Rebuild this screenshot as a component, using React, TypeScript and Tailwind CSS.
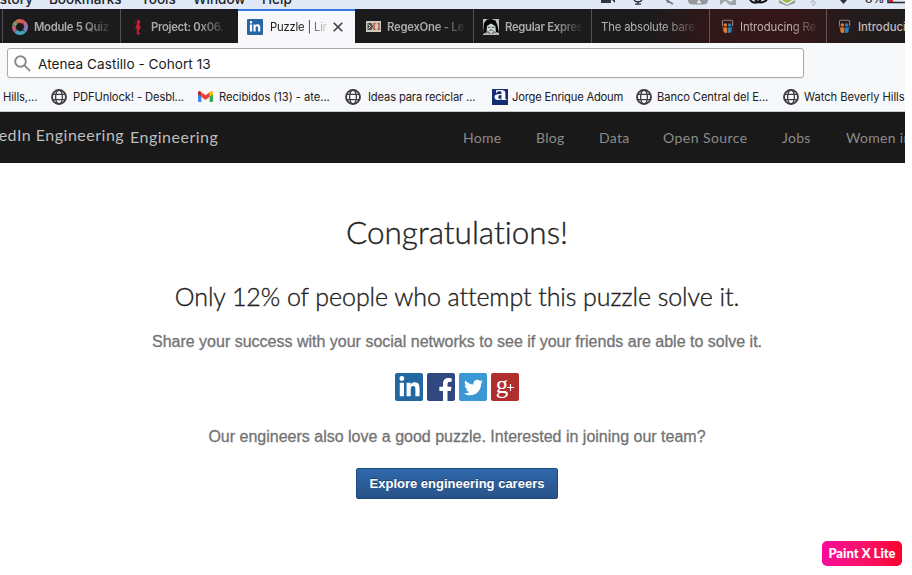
import React from "react";
import { FaFacebookF, FaLinkedinIn, FaTwitter } from "react-icons/fa";

function Globe() {
  return (
    <svg className="size-4 shrink-0" viewBox="0 0 16 16" fill="none" stroke="#3f3f42">
      <circle cx="8" cy="8" r="7" strokeWidth="1.9" />
      <ellipse cx="8" cy="8" rx="3.4" ry="7" strokeWidth="1.3" />
      <path d="M2 5.3h12M2 10.7h12" strokeWidth="1.3" />
    </svg>
  );
}

function Gmail() {
  return (
    <svg className="h-[11px] w-[15px] shrink-0" viewBox="0 0 15 11">
      <path d="M0 1.6v8.4a1 1 0 0 0 1 1h2.4V4.2z" fill="#4285f4" />
      <path d="M15 1.6v8.4a1 1 0 0 1-1 1h-2.4V4.2z" fill="#34a853" />
      <path d="M11.6 4.2V1L13 .2a1.3 1.3 0 0 1 2 1.2v1.8l-3.4 2.6z" fill="#fbbc04" />
      <path d="M0 3.2V1.4A1.3 1.3 0 0 1 2.1.3l1.3.9v4.6z" fill="#c5221f" />
      <path d="M3.4 1.2v4.6l4.1 3.1 4.1-3.1V1.2L7.5 4.3z" fill="#ea4335" />
    </svg>
  );
}

function LinkedInTile() {
  return (
    <span className="flex size-4 shrink-0 items-center justify-center rounded-[1px] bg-[#2764a5]">
      <FaLinkedinIn className="size-3 text-white" />
    </span>
  );
}

function Ring() {
  return (
    <svg className="size-4 shrink-0" viewBox="0 0 16 16" fill="none" strokeWidth="4">
      <path d="M3.800 12.200A6 6 0 0 1 2.100 6.800" stroke="#b9607f" />
      <path d="M2.100 6.800A6 6 0 0 1 3.800 3.800" stroke="#6fa268" />
      <path d="M3.800 3.800A6 6 0 0 1 8 2" stroke="#b97a55" />
      <path d="M8 2a6 6 0 0 1 4.200 1.800" stroke="#d8564e" />
      <path d="M12.200 3.800A6 6 0 0 1 14 8" stroke="#b06ba0" />
      <path d="M14 8a6 6 0 0 1-1.800 4.200" stroke="#7d80bf" />
      <path d="M12.200 12.200A6 6 0 0 1 3.800 12.200" stroke="#3fa3bd" />
      <path d="M5 3.300 9 5M11.500 4.500 12 9M12 11.500 7.500 12M4.500 11.500 4 7" stroke="#1b1b1b" strokeWidth=".5" />
    </svg>
  );
}

function Seahorse() {
  return (
    <svg className="h-4 w-[10px] shrink-0" viewBox="0 0 10 16">
      <path
        d="M2 3.200 4 2.400 4.600.5l1.600.4 1 1.300-.3 1.900-1 1.300 1.400 1.400.2 2.200-1.300 2-.8 1.600.4 1.300 1-.5.5.7-.6 1.200-1.500.4-1.500-1-.3-1.700.7-2-.7-1.500-1.200-.8.3-1 1-.5-.1-1.600.9-1.500-.3-1L2 4.200z"
        fill="#d01a38"
      />
    </svg>
  );
}

function RegexBadge() {
  return (
    <svg className="h-[11px] w-[15px] shrink-0" viewBox="0 0 15 11">
      <path d="M0 0h15v11H0z" fill="#d0c9bd" />
      <path d="M1.500 2h4l1.500 3.500L5.500 9h-4z" fill="#4f504c" />
      <path d="m2.500 3.500 2 2-2 2" fill="none" stroke="#dedbd2" />
      <path d="M9.500 2.700H8v5.600h1.500M11.500 2.700H13v5.600h-1.500" fill="none" stroke="#b6452e" strokeWidth="1.300" />
    </svg>
  );
}

function Face() {
  return (
    <svg className="size-4 shrink-0" viewBox="0 0 16 16">
      <path d="M0 0h16v16H0z" fill="#b9bec0" />
      <path d="M0 15 1 4l3-3.500 4-.5 4.500 1.500 2 5L16 14l-3-1-.5-5.500L8 4.500 4 7l-.5 6z" fill="#050505" />
      <path d="M4.300 7 8 4.800 12 7l-.3 4-1.500 2.500H6L4.400 11z" fill="#cfd5d5" />
      <path d="M5 8.300h2.400M8.800 8.300h2.400M6.500 11.500l1.500-.8 1.700.8M3 14.500l2-2 2 2.500M13 14.500l-2-2-2 2.500" stroke="#44494a" fill="none" />
    </svg>
  );
}

function SlideShare() {
  return (
    <svg className="h-[15px] w-[13px] shrink-0" viewBox="0 0 14 15">
      <path d="M1.600 7V2a1.300 1.300 0 0 1 1.300-1.300h8.300A1.300 1.300 0 0 1 12.500 2v5" fill="none" stroke="#8f7c7c" strokeWidth="1.200" />
      <circle cx="4.700" cy="6" r="1.900" fill="#e67c25" />
      <circle cx="9.300" cy="6" r="1.900" fill="#2882bd" />
      <path d="M.8 7.600 3 8.700h3.700v5.600L4 14.500l-1.500-2V9.800z" fill="#e67c25" />
      <path d="M13.200 7.600 11 8.700H7.300v5.600l2.700.2 1.500-2V9.800z" fill="#2882bd" />
    </svg>
  );
}

const fade = "[mask-image:linear-gradient(to_right,#000_65%,transparent_105%)]";

type TabProps = {
  icon?: React.ReactNode;
  label: string;
  box: string;
  text: string;
};

function Tab({ icon, label, box, text }: TabProps) {
  return (
    <div className={`flex shrink-0 items-center pt-px ${box}`}>
      {icon}
      <span className={`mt-px overflow-hidden whitespace-nowrap ${text}`}>{label}</span>
    </div>
  );
}

function MenuBar() {
  return (
    <div className="flex h-[9px] shrink-0 items-end overflow-hidden bg-[#e0e9f5] font-['Inter'] text-[13.5px] font-medium text-[#202327]">
      <div className="flex h-5 w-[600px] shrink-0 items-end leading-5">
        <span className="-ml-[14px] w-[63px] tracking-[0.1px]">History</span>
        <span className="w-[92px]">Bookmarks</span>
        <span className="w-[52px]">Tools</span>
        <span className="w-[69px]">Window</span>
        <span>Help</span>
      </div>
      <svg className="h-[9px] w-[305px] shrink-0" viewBox="600 0 305 9" fill="none">
        <path d="M601 0h10v3h-10zM612 0h3v3z" fill="#333638" />
        <path d="M634 0q4 4 8 0M638 1v3M635 4.200h6" stroke="#2f3234" strokeWidth="1.300" />
        <path d="m666 0 7 4M668 0v3" stroke="#74787b" strokeWidth="1.600" />
        <path d="M688 0h20q0 4.500-5 4.500h-10q-5 0-5-4.500z" fill="#96999c" />
        <path d="M697 2.500h4M699 0v2.500" stroke="#e8ecef" strokeWidth="1.500" />
        <path d="m720 5 5-4 5 4h6V0h-3l-2 2-4-2h-7z" fill="#a3a6a9" />
        <path d="M750 0q3 4 8 2l3-2M755 0q5 5 12 0" stroke="#111" strokeWidth="2" />
        <path d="m779 0 8 5 8-5v3l-8 3-8-3z" fill="#999c91" />
        <path d="M782 0h10l-5 3z" fill="#91bd35" />
        <path d="m810 3 3-3v6l3-3-3-3" stroke="#b4b9bd" />
        <path d="M840 0h7l-3.500 4z" fill="#303336" />
        <path d="M888 0v2.500h17" stroke="#26282a" strokeWidth="1.500" />
        <path d="M889 0h4v2h-4z" fill="#e51d2d" />
        <text x="865" y="3" fontSize="12" fontFamily="Inter" fill="#303336">8%</text>
      </svg>
    </div>
  );
}

function TabStrip() {
  const bold = "font-semibold text-[#aaa]";
  return (
    <div className="flex h-[34px] shrink-0 overflow-hidden bg-[linear-gradient(to_right,#1b1b1c_0,#1b1b1c_645px,#301718_710px,#351719_790px,#221b1c_860px,#201c1c_905px)] font-['Inter'] text-[11.3px]">
      <Tab icon={<Ring />} label="Module 5 Quiz" box="ml-[2px] w-[118px] border-l border-[#515151] pl-[9px]" text={`ml-[6px] w-[76px] tracking-[-0.3px] ${fade} ${bold}`} />
      <Tab icon={<Seahorse />} label="Project: 0x06." box="w-[118px] border-l border-[#515151] pl-[12px]" text={`ml-[8px] w-[74px] tracking-[-0.3px] ${fade} ${bold}`} />
      <div className="flex w-[117px] shrink-0 items-center border-t-2 border-[#3779e6] bg-[#f8f8fa] pl-[9px]">
        <LinkedInTile />
        <span className={`ml-[7px] w-[57px] overflow-hidden whitespace-nowrap tracking-[-0.2px] text-[#1d1d1f] ${fade}`}>Puzzle | LinkedIn</span>
        <svg className="ml-[6px] size-[10px] shrink-0" viewBox="0 0 10 10" stroke="#404044" strokeWidth="1.600"><path d="m.7.7 8.600 8.600M9.300.7.7 9.300" /></svg>
      </div>
      <Tab icon={<RegexBadge />} label="RegexOne - Learn" box="w-[118px] pl-[11px]" text={`ml-[6px] w-[77px] tracking-[-0.25px] ${fade} ${bold}`} />
      <Tab icon={<Face />} label="Regular Expressions" box="w-[118px] border-l border-[#515151] pl-[9px]" text={`ml-[6px] w-[76px] tracking-[-0.3px] ${fade} ${bold}`} />
      <Tab label="The absolute bare" box="w-[118px] border-l border-[#515151] pl-[9px]" text={`w-[96px] tracking-[-0.15px] text-[#b3b3b3] ${fade}`} />
      <Tab icon={<SlideShare />} label="Introducing Regex" box="w-[117px] border-l border-[#675353] pl-[11px]" text={`ml-[6px] w-[77px] tracking-[-0.1px] text-[#c1b1b1] ${fade}`} />
      <Tab icon={<SlideShare />} label="Introducing" box="w-[118px] border-l border-[#675353] pl-[11px]" text="ml-[7px] w-[77px] font-medium text-[#c1baba]" />
    </div>
  );
}

function Bookmarks() {
  return (
    <div className="flex h-[30px] items-center overflow-hidden whitespace-nowrap font-['Inter'] text-[11.2px] text-[#202022]">
      <span className="ml-[3px] w-[48px] shrink-0 tracking-[-0.1px]">Hills,...</span>
      <div className="flex w-[147px] shrink-0 items-center gap-[6px]"><Globe /><span className="tracking-[-0.1px]">PDFUnlock! - Desbl...</span></div>
      <div className="flex w-[147px] shrink-0 items-center gap-[6px]"><Gmail /><span className="tracking-[-0.05px]">Recibidos (13) - ate...</span></div>
      <div className="flex w-[147px] shrink-0 items-center gap-[7px]"><Globe /><span className="tracking-[-0.15px]">Ideas para reciclar ...</span></div>
      <div className="flex w-[144px] shrink-0 items-center gap-[4px]">
        <span className="flex size-4 shrink-0 items-center justify-center bg-[#142e72] font-['Liberation_Serif'] text-[21px] font-bold leading-none text-white"><span className="-mt-[6px] scale-x-125">a</span></span>
        <span className="tracking-[-0.2px]">Jorge Enrique Adoum</span>
      </div>
      <div className="flex w-[147px] shrink-0 items-center gap-[5px]"><Globe /><span className="tracking-[-0.1px]">Banco Central del E...</span></div>
      <div className="flex w-[147px] shrink-0 items-center gap-[5px]"><Globe /><span className="tracking-[-0.05px]">Watch Beverly Hills</span></div>
    </div>
  );
}

function SiteNav() {
  return (
    <nav className="flex h-[52px] shrink-0 overflow-hidden whitespace-nowrap border-t border-[#c8cacb] bg-[#191919] font-['Lato'] leading-5 text-[#8b8b8b]">
      <div className="flex w-[463px] shrink-0 text-[16px] text-[#bdbdbd]">
        <span className="-ml-[32px] w-[162px] pt-[13px] tracking-[0.5px]">LinkedIn Engineering</span>
        <span className="pt-[15px] tracking-[0.5px]">Engineering</span>
      </div>
      <div className="flex shrink-0 pt-[16px] text-[14px] tracking-[0.3px]">
        <span className="w-[73px]">Home</span>
        <span className="w-[63px]">Blog</span>
        <span className="w-[64px]">Data</span>
        <span className="w-[119px] tracking-[0.45px]">Open Source</span>
        <span className="w-[64px]">Jobs</span>
        <span>Women in</span>
      </div>
    </nav>
  );
}

function ShareButtons() {
  return (
    <div className="mt-[21px] flex gap-1 text-white">
      <span className="flex size-7 items-center justify-center rounded-[2px] bg-[#2168a3]"><FaLinkedinIn className="size-[23px]" /></span>
      <span className="flex size-7 items-end justify-end overflow-hidden rounded-[2px] bg-[#31477f]"><FaFacebookF className="-mr-[2px] size-[23px]" /></span>
      <span className="flex size-7 items-center justify-center rounded-[2px] bg-[#3c98d4]"><FaTwitter className="size-[19px]" /></span>
      <span className="flex size-7 items-center justify-center rounded-[2px] bg-[#b02f2e] font-['Liberation_Serif'] leading-none">
        <span className="-mt-[6px] text-[25px]">g</span>
        <svg className="-ml-px size-[7px]" viewBox="0 0 7 7" stroke="currentColor"><path d="M0 3.500h7M3.500 0v7" strokeWidth="1.100" /></svg>
      </span>
    </div>
  );
}

export default function App() {
  return (
    <div className="h-[575px] w-[912px] overflow-hidden bg-white">
      <div className="flex h-[575px] w-[905px] flex-col overflow-hidden">
        <MenuBar />
        <TabStrip />
        <header className="h-[68px] shrink-0 bg-[#f7f8fa] pt-[5px]">
          <div className="ml-[7px] flex h-[30px] w-[797px] items-center rounded-[3px] border border-[#a9a9ab] bg-white pl-[6px] shadow-[0_1px_2px_#0000000d]">
            <svg className="size-[17px] shrink-0" viewBox="0 0 17 17" fill="none" stroke="#89898c" strokeWidth="1.900"><circle cx="6.500" cy="6.500" r="5.300" /><path d="m10.400 10.400 5.800 5.800" /></svg>
            <span className="mt-[2px] ml-[7px] font-['Inter'] text-[13.6px] tracking-[0.03px] text-[#1a1a1c]">Atenea Castillo - Cohort 13</span>
          </div>
          <div className="mt-[4px]"><Bookmarks /></div>
        </header>
        <SiteNav />
        <main className="flex grow flex-col items-center whitespace-nowrap pl-[9px]">
          <h1 className="mt-[49px] font-['Lato'] text-[31.5px] font-light leading-10 text-[#222] [font-variant-ligatures:none] [-webkit-text-stroke:0.35px_#222]">Congratulations!</h1>
          <h2 className="mt-[28px] font-['Lato'] text-[25px] font-light leading-8 tracking-[-0.07px] text-[#222] [-webkit-text-stroke:0.35px_#222]">Only 12% of people who attempt this puzzle solve it.</h2>
          <p className="mt-[20px] font-['Liberation_Sans'] text-[16px] leading-5 text-[#737373] [-webkit-text-stroke:0.3px_#737373]">Share your success with your social networks to see if your friends are able to solve it.</p>
          <ShareButtons />
          <p className="mt-[26px] font-['Liberation_Sans'] text-[16px] leading-5 text-[#737373] [-webkit-text-stroke:0.3px_#737373]">Our engineers also love a good puzzle. Interested in joining our team?</p>
          <button className="mt-[21px] h-[31px] w-[202px] rounded-[2px] border border-[#1e497c] bg-linear-to-b from-[#3069ad] to-[#275287] font-['Liberation_Sans'] text-[13px] font-bold text-white [text-shadow:0_-1px_0_#1d3f6b]">Explore engineering careers</button>
          <div className="mt-auto mr-[3px] mb-[9px] flex h-[25px] w-[80px] items-center justify-center self-end rounded-[5px] bg-linear-to-r from-[#fa0799] to-[#fb0029] font-['Lato'] text-[13px] font-black text-white">Paint X Lite</div>
        </main>
      </div>
    </div>
  );
}
